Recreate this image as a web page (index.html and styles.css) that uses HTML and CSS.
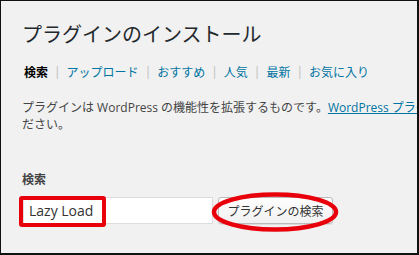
FILE: index.html
```html
<!DOCTYPE html>
<html lang="ja">
<head>
<meta charset="utf-8">
<link rel="stylesheet" href="styles.css">
</head>
<body>
<div class="frame">
  <h1 class="title">プラグインのインストール</h1>
  <ul class="tabs">
    <li class="current">検索</li><li class="sep">|</li>
    <li><a href="#">アップロード</a></li><li class="sep">|</li>
    <li><a href="#">おすすめ</a></li><li class="sep">|</li>
    <li><a href="#">人気</a></li><li class="sep">|</li>
    <li><a href="#">最新</a></li><li class="sep">|</li>
    <li><a href="#">お気に入り</a></li>
  </ul>
  <p class="desc">プラグインは WordPress の機能性を拡張するものです。<a href="#">WordPress プラグインディレクトリ</a>から自動でインストールするか、このページで .zip 形式のプラグインをアップロードしてく<br>ださい。</p>
  <h4 class="label">検索</h4>
  <form class="search">
    <input class="field" type="text" value="Lazy Load">
    <button class="btn" type="button">プラグインの検索</button>
    <span class="mark-box"></span>
    <svg class="mark-ellipse" width="132" height="44" viewBox="0 0 132 44">
      <ellipse cx="66" cy="22" rx="61" ry="17.5" fill="none" stroke="#e8000b" stroke-width="4.5"/>
    </svg>
  </form>
</div>
</body>
</html>
```
FILE: styles.css
```css
* { box-sizing: border-box; }
html, body { margin: 0; padding: 0; }
body { background: #fff; }
.frame {
  width: 419px;
  height: 255px;
  overflow: hidden;
  background: #f1f1f1;
  border: 1px solid #111;
  border-right-width: 2px;
  border-bottom-width: 2px;
  padding-left: 21px;
  font-family: "Open Sans", "Noto Sans CJK JP", sans-serif;
  color: #444;
}
.title {
  margin: 19px 0 0;
  font-family: "Noto Sans CJK JP", sans-serif;
  font-size: 20px;
  line-height: 28px;
  font-weight: 400;
  color: #23282d;
  white-space: nowrap;
}
.tabs {
  list-style: none;
  margin: 16px 0 0;
  padding: 0 0 0 2px;
  display: flex;
  font-family: "Noto Sans CJK JP", sans-serif;
  font-size: 12px;
  line-height: 16px;
  white-space: nowrap;
}
.tabs a { color: #0074a2; text-decoration: none; }
.tabs .current { font-weight: 700; color: #000; }
.tabs .sep { color: #bbb; margin: 0 6px; font-family: "Open Sans", sans-serif; }
.desc {
  margin: 19px 0 0;
  font-size: 12px;
  line-height: 17px;
  white-space: nowrap;
  color: #444;
}
.desc a { color: #0074a2; text-decoration: underline; }
.label {
  margin: 38px 0 0;
  font-family: "Noto Sans CJK JP", sans-serif;
  font-size: 12px;
  line-height: 16px;
  font-weight: 700;
  color: #444;
}
.search {
  position: relative;
  margin: 10px 0 0;
  display: flex;
  gap: 5px;
  align-items: center;
}
.field {
  width: 190px;
  height: 27px;
  margin: 0 0 0 1px;
  padding: 0 5px;
  border: 1px solid #ddd;
  background: #fff;
  font-family: "Open Sans", sans-serif;
  font-size: 14px;
  color: #333;
  outline: none;
}
.btn {
  width: 115px;
  height: 27px;
  padding: 0 4px;
  border: 1px solid #bbb;
  border-radius: 3px;
  background: linear-gradient(#fefefe, #f1f1f1);
  box-shadow: 0 1px 0 rgba(0,0,0,0.08);
  font-family: "Noto Sans CJK JP", sans-serif;
  font-size: 12px;
  color: #333;
  white-space: nowrap;
}
.mark-box {
  position: absolute;
  left: -3px;
  top: -1px;
  width: 87px;
  height: 31px;
  border: 4px solid #e8000b;
  border-radius: 3px;
}
.mark-ellipse {
  position: absolute;
  left: 187px;
  top: -7px;
}
```
